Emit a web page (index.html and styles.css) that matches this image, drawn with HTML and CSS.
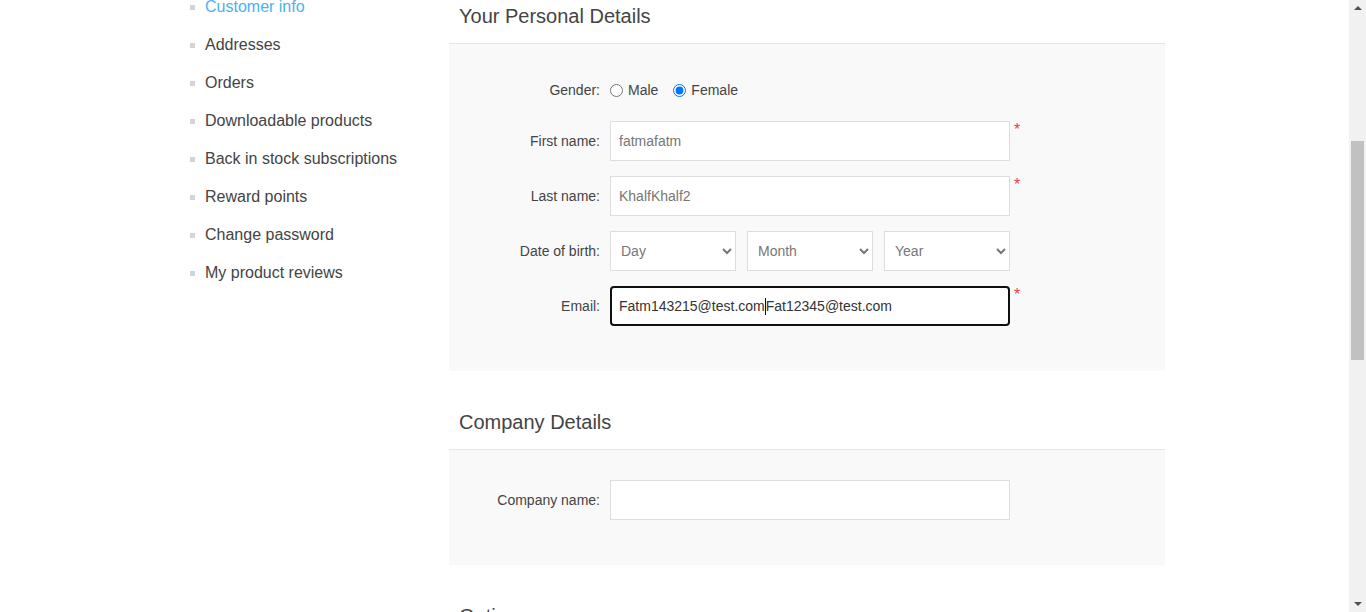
FILE: index.html
```html
<!DOCTYPE html>
<html lang="en">
<head>
<meta charset="utf-8">
<title>Customer info</title>
<link rel="stylesheet" href="styles.css">
</head>
<body>
<div class="page">
  <aside class="sidebar">
    <ul class="nav">
      <li class="active">Customer info</li>
      <li>Addresses</li>
      <li>Orders</li>
      <li>Downloadable products</li>
      <li>Back in stock subscriptions</li>
      <li>Reward points</li>
      <li>Change password</li>
      <li>My product reviews</li>
    </ul>
  </aside>
  <main class="main">
    <section class="fieldset">
      <h2 class="title">Your Personal Details</h2>
      <div class="form-fields">
        <div class="inputs gender">
          <span class="label">Gender:</span>
          <label class="radio"><input type="radio" name="g"><span>Male</span></label>
          <label class="radio"><input type="radio" name="g" checked><span>Female</span></label>
        </div>
        <div class="inputs">
          <span class="label">First name:</span>
          <input class="text" type="text" value="fatmafatm">
          <span class="required">*</span>
        </div>
        <div class="inputs">
          <span class="label">Last name:</span>
          <input class="text" type="text" value="KhalfKhalf2">
          <span class="required">*</span>
        </div>
        <div class="inputs">
          <span class="label">Date of birth:</span>
          <div class="dob">
            <select class="sel"><option>Day</option></select>
            <select class="sel"><option>Month</option></select>
            <select class="sel"><option>Year</option></select>
          </div>
        </div>
        <div class="inputs">
          <span class="label">Email:</span>
          <div class="text focused"><span>Fatm143215@test.com</span><span class="caret"></span><span>Fat12345@test.com</span></div>
          <span class="required">*</span>
        </div>
      </div>
    </section>
    <section class="fieldset">
      <h2 class="title">Company Details</h2>
      <div class="form-fields">
        <div class="inputs">
          <span class="label">Company name:</span>
          <input class="text" type="text" value="">
        </div>
      </div>
    </section>
    <section class="fieldset">
      <h2 class="title">Options</h2>
    </section>
  </main>
</div>
<div class="scrollbar">
  <span class="arrow up"></span>
  <span class="thumb"></span>
  <span class="arrow down"></span>
</div>
</body>
</html>
```
FILE: styles.css
```css
html, body {
  margin: 0;
  padding: 0;
  height: 612px;
  overflow: hidden;
  background: #fff;
  font-family: "Liberation Sans", Arial, sans-serif;
  color: #444;
}

.page {
  display: flex;
  align-items: flex-start;
  padding-left: 190px;
  width: 1159px;
}

.sidebar {
  width: 259px;
  flex: 0 0 259px;
  margin-top: -12px;
}

.nav {
  list-style: none;
  margin: 0;
  padding: 0;
}

.nav li {
  display: flex;
  align-items: center;
  padding: 9px 0;
  line-height: 20px;
  font-size: 16px;
  color: #444;
}

.nav li::before {
  content: "";
  width: 5px;
  height: 5px;
  background: #d4d4d4;
  margin-right: 10px;
  flex: 0 0 5px;
}

.nav li.active {
  color: #4ab2f1;
}

.main {
  width: 716px;
  flex: 0 0 716px;
  margin-top: -5px;
}

.fieldset {
  margin-bottom: 30px;
}

.title {
  margin: 0;
  padding: 10px 10px 16px;
  font-size: 20px;
  line-height: 22px;
  font-weight: normal;
  color: #444;
  border-bottom: 1px solid #e6e6e6;
}

.form-fields {
  background: #f9f9f9;
  padding: 30px 0;
}

.inputs {
  display: flex;
  align-items: center;
  height: 40px;
  margin-bottom: 15px;
  position: relative;
}

.inputs.gender {
  height: 32px;
}

.label {
  width: 151px;
  flex: 0 0 151px;
  margin-right: 10px;
  text-align: right;
  font-size: 14px;
  color: #444;
}

.radio {
  display: flex;
  align-items: center;
  font-size: 14px;
  color: #444;
  margin-right: 15px;
}

.radio input {
  margin: 0 5px 0 0;
  width: 13px;
  height: 13px;
}

.text {
  box-sizing: border-box;
  width: 400px;
  height: 40px;
  border: 1px solid #ddd;
  background: #fff;
  padding: 0 8px;
  font-family: "Liberation Sans", Arial, sans-serif;
  font-size: 14px;
  color: #777;
  margin: 0;
  outline: none;
}

.text.focused {
  display: flex;
  align-items: center;
  border: 2px solid #101010;
  border-radius: 4px;
  padding: 0 7px;
  color: #333;
}

.caret {
  width: 1px;
  height: 17px;
  background: #111;
}

.required {
  position: absolute;
  left: 565px;
  top: 1px;
  color: #e4434b;
  font-size: 16px;
  line-height: 16px;
}

.dob {
  display: flex;
  gap: 11px;
  width: 400px;
}

.sel {
  box-sizing: border-box;
  width: 126px;
  height: 40px;
  border: 1px solid #ddd;
  background-color: #fff;
  padding: 0 6px;
  font-family: "Liberation Sans", Arial, sans-serif;
  font-size: 14px;
  color: #777;
  border-radius: 0;
  margin: 0;
}

.scrollbar {
  position: fixed;
  top: 0;
  right: 0;
  width: 17px;
  height: 612px;
  background: #f1f1f1;
}

.thumb {
  position: absolute;
  left: 2px;
  top: 141px;
  width: 13px;
  height: 219px;
  background: #c1c1c1;
}

.arrow {
  position: absolute;
  left: 5px;
  width: 0;
  height: 0;
  border-left: 4px solid transparent;
  border-right: 4px solid transparent;
}

.arrow.up {
  top: 6px;
  border-bottom: 4px solid #505050;
}

.arrow.down {
  bottom: 6px;
  border-top: 4px solid #505050;
}
```
